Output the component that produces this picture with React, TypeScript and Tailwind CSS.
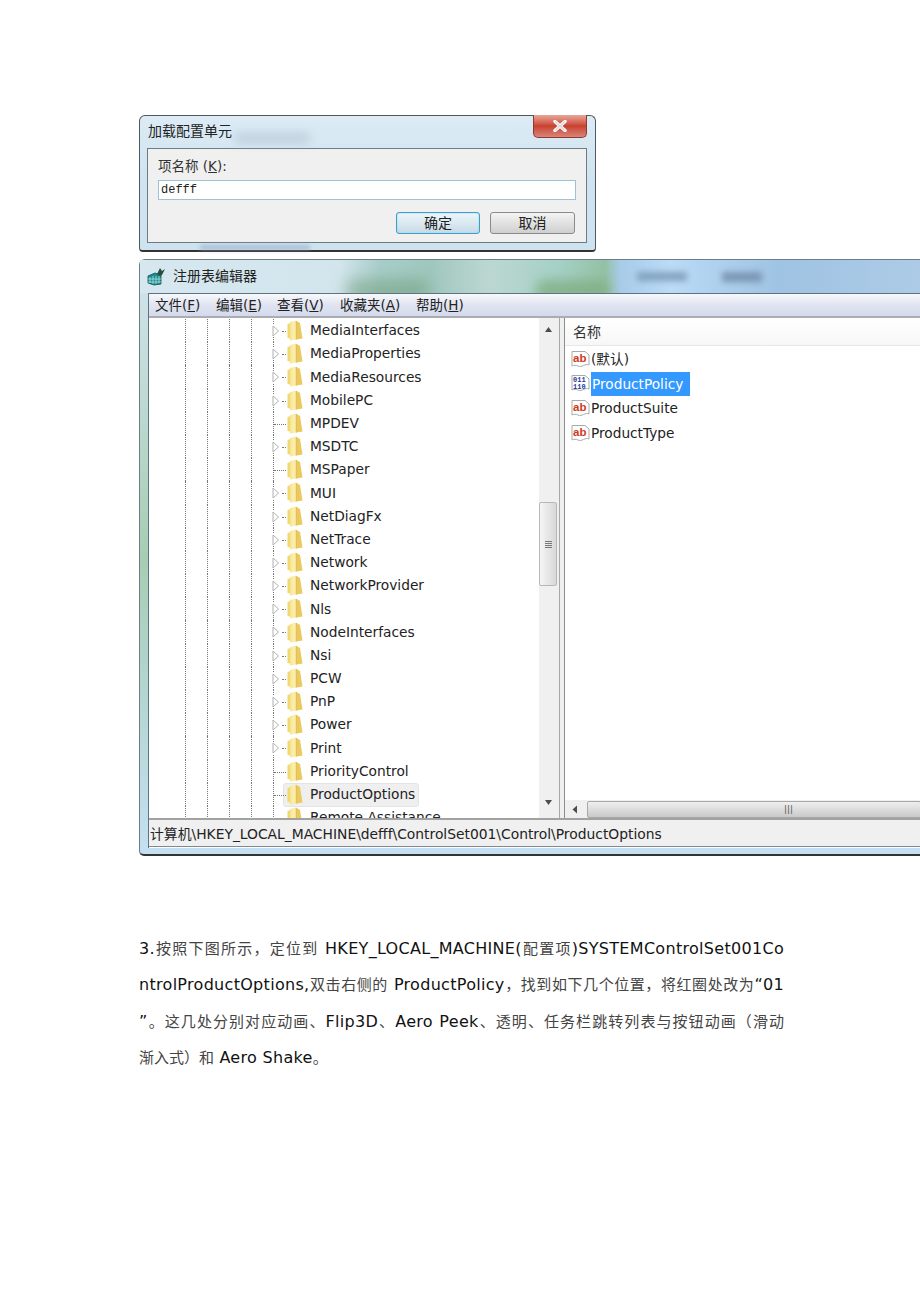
const rows: [string, boolean][] = [
  ["MediaInterfaces", true],
  ["MediaProperties", true],
  ["MediaResources", true],
  ["MobilePC", true],
  ["MPDEV", false],
  ["MSDTC", true],
  ["MSPaper", false],
  ["MUI", true],
  ["NetDiagFx", true],
  ["NetTrace", true],
  ["Network", true],
  ["NetworkProvider", true],
  ["Nls", true],
  ["NodeInterfaces", true],
  ["Nsi", true],
  ["PCW", true],
  ["PnP", true],
  ["Power", true],
  ["Print", true],
  ["PriorityControl", false],
  ["ProductOptions", false],
  ["Remote Assistance", false],
];

const Folder = () => (
  <svg width="16" height="21" viewBox="0 0 16 21" className="shrink-0">
    <defs>
      <linearGradient id="fold" x1="0" x2="1" y1="0" y2="0">
        <stop offset="0" stopColor="#f6e48e" />
        <stop offset="0.6" stopColor="#fcf0b0" />
        <stop offset="1" stopColor="#f3da80" />
      </linearGradient>
    </defs>
    <path d="M0.5 4 L5 2.5 V19 L0.5 18 Z" fill="#f0d873" />
    <path d="M3 2 L9.5 0.5 V19.5 L3 20.5 Z" fill="url(#fold)" />
    <path d="M9.5 1 L13 3 L15.5 18.5 L9.5 19.5 Z" fill="#ecc95c" />
    <path d="M9.5 1 V19.5" stroke="#d8b44c" strokeWidth="0.7" fill="none" />
  </svg>
);

const Arrow = () => (
  <svg width="8" height="12" viewBox="0 0 8 12" className="absolute left-[-2px] top-[6px] bg-white">
    <path d="M1 1 L6.5 6 L1 11 Z" fill="#fff" stroke="#b0b0b0" strokeWidth="1" />
  </svg>
);

const AbIcon = () => (
  <svg width="19" height="19" viewBox="0 0 19 19" className="shrink-0">
    <path d="M1 1.5 H14 L18 5 V15 C14 13 11 18 7 16 C5 15 3 15 1 16 Z" fill="#fff" stroke="#a9a9a9" strokeWidth="1" />
    <text x="2" y="12" fontSize="11.5" fontWeight="700" fill="#cf3a1c" fontFamily="'Liberation Sans', sans-serif">ab</text>
  </svg>
);

const BinIcon = () => (
  <svg width="19" height="19" viewBox="0 0 19 19" className="shrink-0">
    <path d="M1 1.5 H14 L18 5 V15 C14 13 11 18 7 16 C5 15 3 15 1 16 Z" fill="#fff" stroke="#a9a9a9" strokeWidth="1" />
    <text x="2" y="8" fontSize="7" fontWeight="700" fill="#23389c" fontFamily="'Liberation Mono', monospace">011</text>
    <text x="2" y="15" fontSize="7" fontWeight="700" fill="#23389c" fontFamily="'Liberation Mono', monospace">110</text>
  </svg>
);

const RegIcon = () => (
  <svg width="19" height="19" viewBox="0 0 19 19" className="shrink-0">
    <path d="M1 9 L8 6 L14 8 V17 L7 18 L1 16 Z" fill="#1f8a8f" stroke="#0f4f55" strokeWidth="0.8" />
    <path d="M3 10 V16 M6 9 V17 M9 9 V17 M12 9 V16 M1 12 H14 M1 15 H14" stroke="#a8e6e0" strokeWidth="0.8" />
    <path d="M10 7 L13 1 L15 4 L18 2 L15 8 L12 9 Z" fill="#2a4f3c" />
  </svg>
);

const Tri = ({ d }: { d: string }) => (
  <svg width="9" height="7" viewBox="0 0 9 7">
    <path d={d} fill="#4d4d4d" />
  </svg>
);

const Grip = () => (
  <div className="flex flex-col gap-[1px]">
    <div className="w-[7px] h-[1px] bg-[#777]" />
    <div className="w-[7px] h-[1px] bg-[#777]" />
    <div className="w-[7px] h-[1px] bg-[#777]" />
    <div className="w-[7px] h-[1px] bg-[#777]" />
  </div>
);

const TreeRow = ({ name, arrow, active }: { name: string; arrow: boolean; active: boolean }) => (
  <div className="flex h-[23.2px] pl-[36px] text-[13.75px] text-[#222]">
    <div className="w-[22px] border-l border-dotted border-[#777]" />
    <div className="w-[22px] border-l border-dotted border-[#777]" />
    <div className="w-[22px] border-l border-dotted border-[#777]" />
    <div className="w-[22px] border-l border-dotted border-[#777]" />
    <div className="relative w-[14px] shrink-0 border-l border-dotted border-[#777]">
      {arrow ? (
        <>
          <Arrow />
          <div className="absolute left-[8px] top-[12px] w-[4px] border-t border-dotted border-[#777]" />
        </>
      ) : (
        <div className="absolute left-0 top-[12px] w-[12px] border-t border-dotted border-[#777]" />
      )}
    </div>
    <div
      className={
        active
          ? "flex items-center h-[24px] -ml-[4px] pl-[3px] pr-[3px] gap-[7px] bg-[#efefef] border border-[#e4e4e4] rounded-[3px]"
          : "flex items-center gap-[7px]"
      }
    >
      <Folder />
      <span className="whitespace-nowrap">{name}</span>
    </div>
  </div>
);

const ListRow = ({ name, bin, selected }: { name: string; bin?: boolean; selected?: boolean }) => (
  <div className="flex items-center h-[24.6px] pl-[6px] gap-[1px] text-[13.7px] text-[#222]">
    {bin ? <BinIcon /> : <AbIcon />}
    <span className={selected ? "bg-[#3399ff] text-white h-[24px] leading-[24px] pl-[1px] pr-[4px] w-[99px]" : "whitespace-nowrap"}>
      {name}
    </span>
  </div>
);

const MenuItem = ({ label, hot, w }: { label: string; hot: string; w: string }) => (
  <span className={`${w} whitespace-nowrap text-[13.5px] text-[#222]`}>
    {label}(<span className="underline">{hot}</span>)
  </span>
);

const Zh = ({ children }: { children: string }) => (
  <span className="text-[#444] text-[15px] tracking-normal [font-family:'Noto_Sans_CJK_SC',serif]">{children}</span>
);

export default function App() {
  return (
    <div className="relative w-[920px] h-[1302px] overflow-hidden bg-white pt-[115px] pl-[139px] [font-family:'DejaVu_Sans','Noto_Sans_CJK_SC',sans-serif]">
      {/* load hive dialog */}
      <div className="relative w-[457px] h-[137px] rounded-t-[6px] rounded-b-[4px] border border-[#4f5a60] border-b-2 border-b-[#333] bg-gradient-to-b from-[#dcebf5] via-[#cfe3f0] to-[#cfe2f0] pt-[32px] pl-[7px]">
        <div className="absolute left-[95px] top-[16px] w-[75px] h-[12px] bg-[#b4c6d2] blur-[5px] opacity-60" />
        <div className="absolute left-[60px] bottom-0 w-[110px] h-[5px] bg-[#8ea9bf] blur-[2px] opacity-60" />
        <span className="absolute left-[8px] top-[5px] text-[14px] leading-[20px] text-[#222]">加载配置单元</span>
        <div className="absolute right-[8px] -top-px w-[54px] h-[23px] rounded-b-[5px] border border-[#8a3a32] border-t-0 bg-gradient-to-b from-[#e9a79c] via-[#c9402f] to-[#d98478] flex items-center justify-center">
          <svg width="16" height="12" viewBox="0 0 16 12">
            <path d="M3 1.5 L13 10.5 M13 1.5 L3 10.5" stroke="#fff" strokeWidth="3.4" strokeLinecap="round" />
            <path d="M3 1.5 L13 10.5 M13 1.5 L3 10.5" stroke="#d7d7d7" strokeWidth="1.4" />
          </svg>
        </div>
        <div className="w-[440px] h-[95px] border border-[#6f7b83] bg-[#f0f0f0] px-[10px] pt-[7px]">
          <div className="h-[20px] leading-[20px] text-[13.5px] text-[#333]">项名称 (<span className="underline">K</span>):</div>
          <div className="mt-[4px] w-[418px] h-[20px] border border-[#9ec1d6] bg-white pl-[2px] leading-[19px] text-[12px] text-[#222] [font-family:'Liberation_Mono',monospace]">
            defff
          </div>
          <div className="flex justify-end gap-[10px] pr-[1px] mt-[12px]">
            <div className="w-[84px] h-[22px] rounded-[3px] border border-[#3c9fc9] shadow-[inset_0_0_2px_#8fd3ee] bg-gradient-to-b from-[#eef6fa] to-[#c7dbe6] text-center text-[14px] leading-[20px] text-[#222]">
              确定
            </div>
            <div className="w-[85px] h-[22px] rounded-[3px] border border-[#8a8a8a] bg-gradient-to-b from-[#f4f4f4] to-[#cfcfcf] text-center text-[14px] leading-[20px] text-[#222]">
              取消
            </div>
          </div>
        </div>
      </div>

      {/* registry editor */}
      <div className="relative mt-[7px] w-[800px] h-[597px] rounded-tl-[6px] rounded-bl-[5px] border border-r-0 border-[#6d7e88] border-b-2 border-b-[#333] bg-gradient-to-b from-[#d3e5ee] via-[#a6cdb3] to-[#c4e0f2]">
        <div className="relative h-[33px] overflow-hidden bg-[linear-gradient(90deg,#d6e7f0_0,#d2e5ec_200px,#a8cdc9_240px,#9fc7bd_290px,#bcd7d2_350px,#a4d0c6_420px,#94c0a4_465px,#a7cbe8_480px,#bbdbf6_530px,#9fc3e3_640px,#adcbe6_781px)]">
          <div className="absolute left-[205px] top-[20px] w-[85px] h-[20px] bg-[#6f9c78] blur-[8px] opacity-60 rounded-full" />
          <div className="absolute left-[395px] top-[20px] w-[75px] h-[20px] bg-[#7fae80] blur-[6px] opacity-80 rounded-full" />
          <div className="absolute left-[497px] top-[12px] w-[50px] h-[9px] bg-[#7795b3] blur-[3px] opacity-80" />
          <div className="absolute left-[582px] top-[12px] w-[40px] h-[10px] bg-[#6f8aa8] blur-[3px] opacity-80" />
          <div className="flex items-center h-full pl-[7px] gap-[7px]">
            <RegIcon />
            <span className="text-[14px] text-[#222]">注册表编辑器</span>
          </div>
        </div>

        <div className="ml-[8px] h-[555px] w-[773px] border-t border-l border-[#5f7285] bg-white overflow-hidden">
          <div className="flex items-center h-[24px] pl-[6px] bg-gradient-to-b from-[#f8f9fc] via-[#e0e4f1] to-[#d5daeb] border-b-2 border-[#a9acb3]">
            <MenuItem label="文件" hot="F" w="w-[61px]" />
            <MenuItem label="编辑" hot="E" w="w-[61px]" />
            <MenuItem label="查看" hot="V" w="w-[63px]" />
            <MenuItem label="收藏夹" hot="A" w="w-[76px]" />
            <MenuItem label="帮助" hot="H" w="w-[60px]" />
          </div>

          <div className="flex h-[502px] border-b-2 border-[#a2a2a2]">
            <div className="w-[390px] h-full pt-[1px] overflow-hidden">
              {rows.map(([name, arrow]) => (
                <TreeRow key={name} name={name} arrow={arrow} active={name === "ProductOptions"} />
              ))}
            </div>
            <div className="flex flex-col items-center w-[20px] h-full bg-[#f0f0f0]">
              <div className="h-[23px] pt-[8px] -ml-[2px]">
                <Tri d="M4.5 1 L8 6 H1 Z" />
              </div>
              <div className="mt-[161px] flex items-center justify-center self-start w-[18px] h-[84px] rounded-[2px] border border-[#b8b8b8] bg-[linear-gradient(90deg,#f5f5f5,#d8d8d8)]">
                <Grip />
              </div>
              <div className="mt-auto h-[19px] -ml-[2px]">
                <Tri d="M1 1 H8 L4.5 6 Z" />
              </div>
            </div>
            <div className="w-[1px] h-full bg-[#a8a8a8]" />
            <div className="w-[4px] h-full bg-[#f0f0f0]" />
            <div className="flex flex-col flex-1 h-full border-l border-[#8d8d8d]">
              <div className="flex items-center h-[28px] pt-[2px] pl-[8px] text-[14px] text-[#333] border-b border-[#e8e8e8] bg-gradient-to-b from-white to-[#f7f7f7]">名称</div>
              <div className="flex-1 pt-[1px]">
                <ListRow name="(默认)" />
                <ListRow name="ProductPolicy" bin selected />
                <ListRow name="ProductSuite" />
                <ListRow name="ProductType" />
              </div>
              <div className="flex items-center h-[18px] bg-[#f0f0f0]">
                <div className="w-[22px] pl-[7px] flex">
                  <svg width="6" height="9" viewBox="0 0 6 9">
                    <path d="M5 0.5 V8.5 L0.5 4.5 Z" fill="#4d4d4d" />
                  </svg>
                </div>
                <div className="flex-1 flex items-center h-[17px] rounded-[2px] border border-[#a8a8a8] bg-gradient-to-b from-[#efefef] to-[#c9c9c9] pl-[196px] text-[9px] leading-none text-[#555]">
                  |||
                </div>
              </div>
            </div>
          </div>

          <div className="flex items-center h-[27px] pt-[2px] pl-[1px] bg-[#f0f0f0] border-b border-[#7d8a93] text-[13.85px] text-[#222] whitespace-nowrap">
            计算机\HKEY_LOCAL_MACHINE\defff\ControlSet001\Control\ProductOptions
          </div>
        </div>
      </div>

      {/* instructions */}
      <div className="mt-[74px] w-[645px] text-[16px] tracking-[0.3px] leading-[36.4px] text-[#111]">
        <div className="h-[36.4px] whitespace-nowrap [text-align-last:justify]">
          3.<Zh>按照下图所示，定位到</Zh> HKEY_LOCAL_MACHINE(<Zh>配置项</Zh>)SYSTEMControlSet001Co
        </div>
        <div className="h-[36.4px] whitespace-nowrap [text-align-last:justify]">
          ntrolProductOptions,<Zh>双击右侧的</Zh> ProductPolicy<Zh>，找到如下几个位置，将红圈处改为</Zh>“01
        </div>
        <div className="h-[36.4px] whitespace-nowrap [text-align-last:justify]">
          ”<Zh>。这几处分别对应动画、</Zh>Flip3D<Zh>、</Zh>Aero Peek<Zh>、透明、任务栏跳转列表与按钮动画（滑动</Zh>
        </div>
        <div className="h-[36.4px] whitespace-nowrap">
          <Zh>渐入式）和</Zh> Aero Shake<Zh>。</Zh>
        </div>
      </div>
    </div>
  );
}
